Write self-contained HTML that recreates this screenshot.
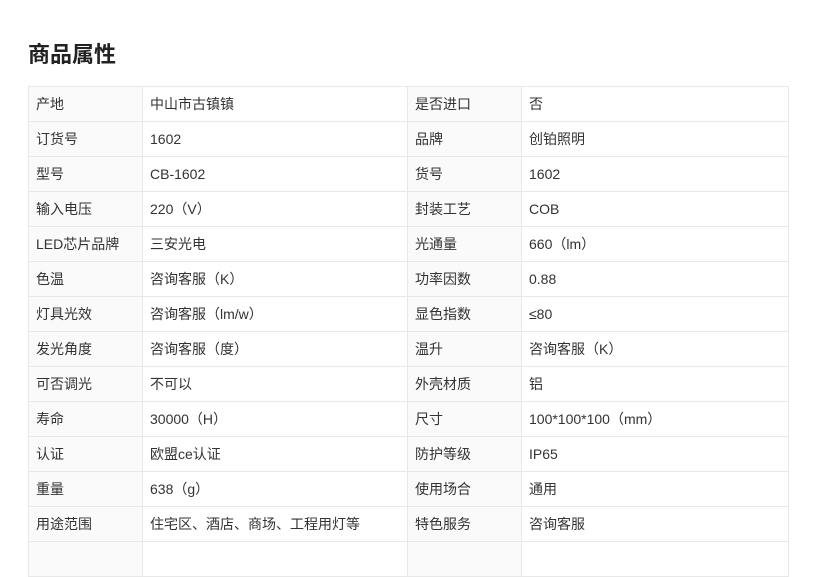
<!DOCTYPE html><html><head><meta charset="utf-8"><style>
body{margin:0;background:#fff;width:818px;height:548px;overflow:hidden;font-family:"Liberation Sans","Noto Sans CJK SC",sans-serif;color:#333}
h1{position:absolute;left:28px;top:40px;margin:0;font-size:22px;font-weight:bold;color:#222;line-height:30px}
table{position:absolute;left:28px;top:86px;border-collapse:collapse;width:760px;table-layout:fixed}
td{border:1px solid #e8e8e8;height:34px;padding:0 0 0 7px;font-size:14px;line-height:34px;white-space:nowrap;overflow:hidden}
td.l{background:#fafafa}
</style></head><body>
<h1>商品属性</h1>
<table><colgroup><col style="width:114px"><col style="width:265px"><col style="width:114px"><col style="width:267px"></colgroup>
<tr><td class="l">产地</td><td>中山市古镇镇</td><td class="l">是否进口</td><td>否</td></tr>
<tr><td class="l">订货号</td><td>1602</td><td class="l">品牌</td><td>创铂照明</td></tr>
<tr><td class="l">型号</td><td>CB-1602</td><td class="l">货号</td><td>1602</td></tr>
<tr><td class="l">输入电压</td><td>220（V）</td><td class="l">封装工艺</td><td>COB</td></tr>
<tr><td class="l">LED芯片品牌</td><td>三安光电</td><td class="l">光通量</td><td>660（lm）</td></tr>
<tr><td class="l">色温</td><td>咨询客服（K）</td><td class="l">功率因数</td><td>0.88</td></tr>
<tr><td class="l">灯具光效</td><td>咨询客服（lm/w）</td><td class="l">显色指数</td><td>≤80</td></tr>
<tr><td class="l">发光角度</td><td>咨询客服（度）</td><td class="l">温升</td><td>咨询客服（K）</td></tr>
<tr><td class="l">可否调光</td><td>不可以</td><td class="l">外壳材质</td><td>铝</td></tr>
<tr><td class="l">寿命</td><td>30000（H）</td><td class="l">尺寸</td><td>100*100*100（mm）</td></tr>
<tr><td class="l">认证</td><td>欧盟ce认证</td><td class="l">防护等级</td><td>IP65</td></tr>
<tr><td class="l">重量</td><td>638（g）</td><td class="l">使用场合</td><td>通用</td></tr>
<tr><td class="l">用途范围</td><td>住宅区、酒店、商场、工程用灯等</td><td class="l">特色服务</td><td>咨询客服</td></tr>
<tr><td class="l"></td><td></td><td class="l"></td><td></td></tr>
</table>
</body></html>
